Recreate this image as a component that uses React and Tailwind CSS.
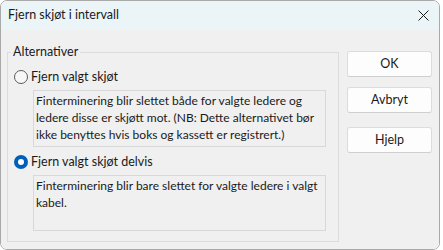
import React from "react";

const font = { fontFamily: 'Lato, "Segoe UI", sans-serif' };

const Radio = ({ checked }) =>
  checked ? (
    <span className="w-[14px] h-[14px] rounded-full bg-[#005fb8] flex items-center justify-center shrink-0">
      <span className="w-[6px] h-[6px] rounded-full bg-white" />
    </span>
  ) : (
    <span className="w-[14px] h-[14px] rounded-full border border-[#5a5a5a] bg-[#f7f7f7] shrink-0" />
  );

const Option = ({ checked, label, children, boxH }) => (
  <div>
    <div className="flex items-center gap-[3px] h-[16px] ml-[6px]">
      <Radio checked={checked} />
      <span className="text-[12.5px]">{label}</span>
    </div>
    <div
      className={`ml-[25px] mr-[12px] mt-[5px] border border-[#d8d8d8] pl-[2px] pt-px leading-[17px] ${boxH}`}
    >
      {children}
    </div>
  </div>
);

const Button = ({ children }) => (
  <button className="w-[85px] h-[26px] bg-[#fdfdfd] border border-[#dcdcdc] border-b-[#cfcfcf] rounded-[3px] text-[12.5px] text-[#1a1a1a]">
    {children}
  </button>
);

export default function App() {
  return (
    <div className="w-[443px] h-[250px] bg-white" style={font}>
      <div className="w-[440px] h-[250px] border border-[#a9a9a9] rounded-[7px] overflow-hidden flex flex-col text-[12px] text-[#1a1a1a]">
        <div className="h-[29px] bg-[#ebf5f8] flex items-center justify-between pl-[7px] pr-[9px] shrink-0">
          <span className="text-[12.5px]">Fjern skjøt i intervall</span>
          <svg width="11" height="11" viewBox="0 0 11 11" className="mr-[1px]">
            <path d="M0.5 0.5 L10.5 10.5 M10.5 0.5 L0.5 10.5" stroke="#1a1a1a" strokeWidth="1" />
          </svg>
        </div>
        <div className="flex-1 bg-[#f0f0f0] flex pl-[6px] pt-[14px]">
          <fieldset className="w-[332px] h-[198px] border border-[#dcdcdc] px-0">
            <legend className="ml-[3px] px-[2px] leading-[16px] text-[12.5px]">Alternativer</legend>
            <div className="flex flex-col gap-[7px] pt-[9px]">
              <Option label="Fjern valgt skjøt" boxH="h-[57px]">
                Finterminering blir slettet både for valgte ledere og ledere disse er skjøtt mot. (NB: Dette alternativet bør ikke benyttes hvis boks og kassett er registrert.)
              </Option>
              <Option checked label="Fjern valgt skjøt delvis" boxH="h-[56px]">
                Finterminering blir bare slettet for valgte ledere i valgt kabel.
              </Option>
            </div>
          </fieldset>
          <div className="flex flex-col ml-[8px] pt-[7px]">
            <Button>OK</Button>
            <div className="mt-[10px]">
              <Button>Avbryt</Button>
            </div>
            <div className="mt-[14px]">
              <Button>Hjelp</Button>
            </div>
          </div>
        </div>
      </div>
    </div>
  );
}
